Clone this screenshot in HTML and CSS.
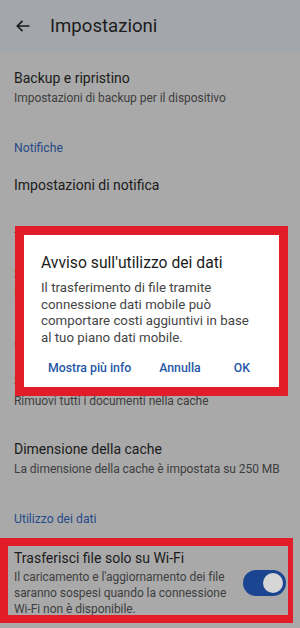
FILE: index.html
```html
<!DOCTYPE html>
<html lang="it">
<head>
<meta charset="utf-8">
<link rel="stylesheet" href="styles.css">
</head>
<body>
<div class="screen">
  <header class="topbar">
    <svg class="back" width="16" height="16" viewBox="0 0 16 16"><path d="M14.5 8H2.5M7.5 2.8L2.3 8l5.2 5.2" fill="none" stroke="#1c1c1c" stroke-width="1.7"/></svg>
    <h1 class="title">Impostazioni</h1>
  </header>
  <main class="list">
    <div class="item first">
      <div class="item-title">Backup e ripristino</div>
      <div class="item-sub">Impostazioni di backup per il dispositivo</div>
    </div>
    <div class="section">Notifiche</div>
    <div class="item">
      <div class="item-title">Impostazioni di notifica</div>
    </div>
    <div class="section">Tema</div>
    <div class="item">
      <div class="item-title">Scegli tema</div>
      <div class="item-sub">Impostazione predefinita di sistema</div>
    </div>
    <div class="section">Cache</div>
    <div class="item">
      <div class="item-title">Svuota cache</div>
      <div class="item-sub">Rimuovi tutti i documenti nella cache</div>
    </div>
    <div class="item">
      <div class="item-title">Dimensione della cache</div>
      <div class="item-sub">La dimensione della cache è impostata su 250 MB</div>
    </div>
    <div class="section">Utilizzo dei dati</div>
    <div class="item switch-item">
      <div class="switch-text">
        <div class="item-title">Trasferisci file solo su Wi-Fi</div>
        <div class="item-sub">Il caricamento e l'aggiornamento dei file saranno sospesi quando la connessione Wi-Fi non è disponibile.</div>
      </div>
      <div class="toggle"><span class="thumb"></span></div>
    </div>
  </main>

  <div class="mark mark-switch"></div>

  <div class="dialog">
    <div class="dialog-title">Avviso sull'utilizzo dei dati</div>
    <div class="dialog-body">Il trasferimento di file tramite<br>connessione dati mobile può<br>comportare costi aggiuntivi in base<br>al tuo piano dati mobile.</div>
    <div class="dialog-actions">
      <span class="btn btn-more">Mostra più info</span>
      <span class="btn btn-cancel">Annulla</span>
      <span class="btn btn-ok">OK</span>
    </div>
  </div>
</div>
</body>
</html>
```
FILE: styles.css
```css
* { box-sizing: border-box; margin: 0; padding: 0; }
html, body { width: 300px; height: 628px; overflow: hidden; }
body {
  background: #a9a9a9;
  font-family: Roboto, "Noto Sans", "Liberation Sans", sans-serif;
  color: #1b1b1b;
}
.screen { position: relative; width: 300px; height: 628px; }

.topbar {
  height: 52px;
  background: #a3a6aa;
  display: flex;
  align-items: center;
  padding-left: 15px;
}
.back { display: block; margin-right: 19px; }
.title { font-size: 18.6px; font-weight: 400; color: #1c1c1c; }

.list { display: flex; flex-direction: column; }
.item { padding: 14px 14px 16px 14px; }
.item.first { padding-top: 16px; }
.item-title { font-size: 14px; line-height: 20px; color: #1b1b1b; }
.item-sub { font-size: 12px; line-height: 16px; margin-top: 2px; color: #3e3e3e; letter-spacing: -0.05px; }
.section {
  padding: 16px 14px 3px;
  font-size: 12.2px;
  line-height: 20px;
  color: #274b88;
}

.switch-item { display: flex; align-items: center; padding-top: 16px; padding-right: 14px; }
.switch-item .item-sub { margin-top: 1px; }
.switch-text { width: 220px; flex: none; }
.toggle {
  flex: none;
  margin-left: auto;
  width: 43px;
  height: 26px;
  border-radius: 13px;
  background: #1b4591;
  display: flex;
  align-items: center;
  justify-content: flex-end;
  padding-right: 3px;
  margin-top: 1px;
}
.thumb {
  width: 20px;
  height: 20px;
  border-radius: 50%;
  background: #d6d6d6;
}

.mark {
  position: absolute;
  border: 8px solid #e21d29;
}
.mark-switch { left: 0; top: 538px; width: 293px; height: 85px; border-right-width: 5px; }

.dialog {
  position: absolute;
  left: 15px;
  top: 226px;
  width: 273px;
  height: 170px;
  background: #ffffff;
  border: 9px solid #e21d29;
  padding: 17px 8px 0 17px;
}
.dialog-title { font-size: 15.7px; line-height: 22px; color: #1c1c1c; }
.dialog-body {
  margin-top: 6px;
  font-size: 13.3px;
  line-height: 16.6px;
  color: #454545;
  white-space: nowrap;
}
.dialog-actions {
  margin-top: 15px;
  display: flex;
  font-size: 12.3px;
  font-weight: 500;
  color: #2656a6;
}
.btn-more { margin-left: 7px; }
.btn-cancel { margin-left: 28px; }
.btn-ok { margin-left: auto; margin-right: 21px; }
```
